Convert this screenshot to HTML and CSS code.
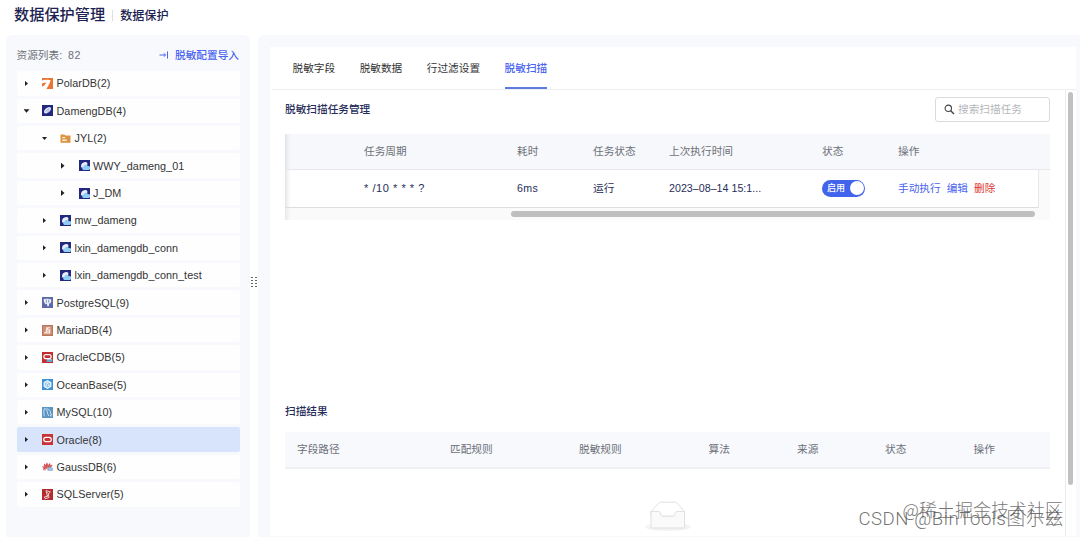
FILE: index.html
```html
<!DOCTYPE html>
<html lang="zh-CN">
  <head>
    <meta charset="utf-8">
    <title>数据保护管理</title>
    <link rel="stylesheet" href="styles.css">
  </head>
  <body>
    <!-- icon set -->
    <svg class="defs" width="0" height="0">
      <symbol id="polar" viewBox="0 0 11 11"><rect width="11" height="11" fill="#ea7432"/><path d="M0 2.6C2 1.6 5 1.6 8.6 2.2 8 4.8 6.6 7.6 4.400 11H0V8.600C2 7.800 3.600 6.200 4.400 4.400 3 4.600 1.400 4.800 0 5.600Z" fill="#fff"/></symbol>
      <symbol id="dameng" viewBox="0 0 11 11"><rect width="11" height="11" fill="#22287e"/><path d="M2 6.6C2.4 4.4 4.4 2.4 6.6 2.2 8.6 1.8 9.4 3 8.8 4.6 8.2 6.6 6.4 8 4.4 8.4 2.8 8.6 1.8 8 2 6.6Z" fill="#e3e9f8"/><path d="M3.4 6.4 7.4 3.4M5.2 7.2l2.4-2" stroke="#6f86c6" stroke-width=".7"/></symbol>
      <symbol id="dmconn" viewBox="0 0 11 11"><rect width="11" height="11" fill="#22287e"/><path d="M2 6.4C2 3.9 3.8 2.3 6 2.1c2-.2 2.8.9 2.3 2.7L6 7.6H3.2C2.3 7.6 2 7.2 2 6.4Z" fill="#e8edf9"/><path d="M4.4 9.900a1.800 1.800 0 0 1 .2-3.500 2.300 2.300 0 0 1 4.300-.2A1.900 1.900 0 0 1 10 9.900Z" fill="#8fcdf4"/></symbol>
      <symbol id="folder" viewBox="0 0 11 11"><path d="M.5 1.500h3.900l.9 1h5.200v7.300H.5Z" fill="#dc9340"/><path d="M2.200 4h3v1.300h-3zM2.200 6.400h4.600v1.700H2.200z" fill="#fff0d9"/></symbol>
      <symbol id="postgres" viewBox="0 0 11 11"><rect width="11" height="11" fill="#5c6ba8"/><path d="M1.700 2.200c1.600-.7 5.600-.8 7.500.2.4 1.700-.2 3.300-1.400 4.400L7.400 5.600 6.800 9.200H5.300L4.900 6.500 3.800 7.600C2.500 6.500 1.500 4.100 1.700 2.200Z" fill="#edf0fa"/><path d="M4.300 2.500v3.400M6.700 2.600v3" stroke="#5c6ba8" stroke-width=".7"/></symbol>
      <symbol id="maria" viewBox="0 0 11 11"><rect width="11" height="11" fill="#b9775d"/><rect x="1.200" y="1.200" width="8.600" height="8.600" fill="#cf9179"/><path d="M4.300 2.200h4v1H6.200v1h2v4.400h-6v-1l2-.9-1-.8 1.100-1Z" fill="#fff1e8"/><path d="M5 5.400h2M4.700 7.100h2.400" stroke="#b9775d" stroke-width=".6"/></symbol>
      <symbol id="oraclecdb" viewBox="0 0 11 11"><rect width="11" height="11" fill="#c22d30"/><rect x="1.900" y="2.700" width="7.200" height="3.900" rx="1.950" fill="none" stroke="#fff" stroke-width="1.200"/><path d="M4.600 10V7.100h5.600V10Z" fill="#68a5cb"/><path d="M5 7.200h4.600" stroke="#fff" stroke-width=".6"/></symbol>
      <symbol id="ocean" viewBox="0 0 11 11"><rect width="11" height="11" fill="#3e91d6"/><path d="M5.500 1 9.400 3.300v4.500L5.500 10 1.600 7.800V3.300Z" fill="#e9f5ff"/><path d="M5.500 3.200 7.600 4.400v2.300L5.500 7.900 3.400 6.700V4.400ZM5.500 5.500v2.200M3.500 4.500l2 1 2-1" fill="none" stroke="#59a5df" stroke-width=".6"/></symbol>
      <symbol id="mysql" viewBox="0 0 11 11"><rect width="11" height="11" fill="#5b96c4"/><path d="M2.300 9.300C1.800 6.800 1.700 3.600 2.200 1.800 4 1.600 5 3.200 5.300 4.800c.3 1.800.6 3.200 1.600 4.300M4.600 1.700c2.600.4 3.800 2 4 4.300.1.900.5 1.500 1.100 2L8.200 8.200l.8 1.300" fill="none" stroke="#e6f2fb" stroke-width=".8"/></symbol>
      <symbol id="oracle" viewBox="0 0 11 11"><rect width="11" height="11" fill="#c93335"/><rect x="1.700" y="3.400" width="7.600" height="4.200" rx="2.100" fill="none" stroke="#fff" stroke-width="1.100"/></symbol>
      <symbol id="gauss" viewBox="0 0 11 11"><g fill="#d54b49"><path d="M5.200 8.600C3.400 5.800 3.500 3 5 1.600c1.300 1.600 1.200 4 .2 7Z"/><path d="M4.600 8.500C2.400 6.800 1.400 4.600 2.200 2.600c1.800 1.200 2.500 3.400 2.400 5.900Z"/><path d="M4.200 8.700C1.800 8.100.4 6.800.3 4.900c2 .4 3.400 1.800 3.900 3.800ZM3.900 9.200H1.500L.7 7.800Z"/><path d="M6 7.600C5.700 5 6.200 2.800 8 1.900c1 1.900.1 4-2 5.700ZM7.300 6.400C7.800 4.600 8.900 3.600 10.400 3.700c0 1.500-1 2.500-3.100 2.700Z"/></g><path d="M5.500 9.700V6.400l2.200-.8 3 1.500v2.600Z" fill="#83a5ca"/><path d="M6.600 7.500h3M6.600 8.700h3" stroke="#d8e5f1" stroke-width=".5"/></symbol>
      <symbol id="mssql" viewBox="0 0 11 11"><rect width="11" height="11" fill="#b22c30"/><path d="M4 1.600 8.400 3 6.300 4.900 7 8.500 3.200 9.700 2.300 7.900 5.400 7.500 4.800 4.900Z" fill="none" stroke="#f6dcdc" stroke-width=".9"/><path d="M4.900 3.200 6.400 4.700M4.700 7.600l1.700-1.800" stroke="#fff" stroke-width=".8"/></symbol>
    </svg>

    <header class="page-head">
      <h1>数据保护管理</h1>
      <span class="divider"></span>
      <span class="crumb">数据保护</span>
    </header>

    <div class="layout">
      <aside class="sidebar">
        <div class="side-head">
          <span>资源列表:&nbsp; <span class="total">82</span></span>
          <a class="import">
            <svg width="10" height="8" viewBox="0 0 10 8"><path d="M.5 4h6M4.800 2.300 6.600 4 4.800 5.700M8.500.4v7.200" fill="none" stroke="#4a63f0" stroke-width="1"/></svg>
            脱敏配置导入
          </a>
        </div>
        <ul class="tree">
          <li><i class="caret"></i><svg class="db"><use href="#polar"/></svg>PolarDB(2)</li>
          <li><i class="caret open"></i><svg class="db"><use href="#dameng"/></svg>DamengDB(4)</li>
          <li class="lv2"><i class="caret open"></i><svg class="db"><use href="#folder"/></svg>JYL(2)</li>
          <li class="lv3"><i class="caret"></i><svg class="db"><use href="#dmconn"/></svg>WWY_dameng_01</li>
          <li class="lv3"><i class="caret"></i><svg class="db"><use href="#dmconn"/></svg>J_DM</li>
          <li class="lv2"><i class="caret"></i><svg class="db"><use href="#dmconn"/></svg>mw_dameng</li>
          <li class="lv2"><i class="caret"></i><svg class="db"><use href="#dmconn"/></svg>lxin_damengdb_conn</li>
          <li class="lv2"><i class="caret"></i><svg class="db"><use href="#dmconn"/></svg>lxin_damengdb_conn_test</li>
          <li><i class="caret"></i><svg class="db"><use href="#postgres"/></svg>PostgreSQL(9)</li>
          <li><i class="caret"></i><svg class="db"><use href="#maria"/></svg>MariaDB(4)</li>
          <li><i class="caret"></i><svg class="db"><use href="#oraclecdb"/></svg>OracleCDB(5)</li>
          <li><i class="caret"></i><svg class="db"><use href="#ocean"/></svg>OceanBase(5)</li>
          <li><i class="caret"></i><svg class="db"><use href="#mysql"/></svg>MySQL(10)</li>
          <li class="selected"><i class="caret"></i><svg class="db"><use href="#oracle"/></svg>Oracle(8)</li>
          <li><i class="caret"></i><svg class="db"><use href="#gauss"/></svg>GaussDB(6)</li>
          <li><i class="caret"></i><svg class="db"><use href="#mssql"/></svg>SQLServer(5)</li>
        </ul>
      </aside>

      <div class="splitter">
        <span></span><span></span><span></span><span></span>
        <span></span><span></span><span></span><span></span>
      </div>

      <main class="main">
        <div class="card">
          <nav class="tabs">
            <a>脱敏字段</a>
            <a>脱敏数据</a>
            <a>行过滤设置</a>
            <a class="active">脱敏扫描</a>
          </nav>
          <div class="card-body">
            <div class="content">
              <div class="title-row">
                <h2>脱敏扫描任务管理</h2>
                <label class="search">
                  <svg width="11" height="11" viewBox="0 0 11 11"><circle cx="4.300" cy="4.300" r="3.200" fill="none" stroke="#444" stroke-width="1.100"/><path d="M6.700 6.700 10 10" stroke="#444" stroke-width="1.400"/></svg>
                  <span>搜索扫描任务</span>
                </label>
              </div>

              <div class="task-table">
                <div class="task-row task-head">
                  <span></span><span>任务周期</span><span>耗时</span><span>任务状态</span><span>上次执行时间</span><span>状态</span><span>操作</span>
                </div>
                <div class="task-row task-data">
                  <span></span><span class="cron">* /10 * * * ?</span><span class="cost">6ms</span><span>运行</span><span class="time">2023–08–14 15:1...</span>
                  <span><b class="switch">启用<i></i></b></span>
                  <span class="ops"><a>手动执行</a><a>编辑</a><a class="danger">删除</a></span>
                </div>
                <div class="hscroll"><div class="hthumb"></div></div>
              </div>

              <h2 class="result-title">扫描结果</h2>
              <div class="result-head">
                <span>字段路径</span><span>匹配规则</span><span>脱敏规则</span><span>算法</span><span>来源</span><span>状态</span><span>操作</span>
              </div>
              <div class="empty">
                <svg width="46" height="30" viewBox="0 0 46 30"><ellipse cx="23" cy="26" rx="23" ry="4" fill="#f3f3f4"/><g fill="#fafafa" stroke="#d9d9d9" stroke-width=".8"><path d="M39.500 10.500 31.800 1.800c-.3-.4-.7-.6-1.200-.6H15.400c-.5 0-.9.2-1.200.6L6 10.500v4.800h33.500Z" fill="#fff"/><path d="M29.900 13c0-1.400.9-2.500 2-2.500h7.600v15.300c0 .6-.5 1.200-1.200 1.200H7.200c-.7 0-1.200-.6-1.200-1.200V10.500h7.600c1.100 0 2 1.100 2 2.500s.9 2.200 2 2.200h10.300c1.100 0 2-.8 2-2.200Z"/></g></svg>
              </div>
            </div>
            <div class="vscroll"><div class="vthumb"></div></div>
          </div>
        </div>
      </main>
    </div>

    <div class="mark mark-top">@稀土掘金技术社区</div>
    <div class="mark mark-bottom">CSDN @BinTools图尔兹</div>
  </body>
</html>
```
FILE: styles.css
```css
* {
  box-sizing: border-box;
}

html, body {
  height: 537px;
  overflow: hidden;
}

body {
  margin: 0;
  background: #fff;
  color: #333;
  font-family: "Liberation Sans", "Noto Sans CJK SC", sans-serif;
  font-size: 10.67px;
  line-height: 16px;
  display: flex;
  flex-direction: column;
}

h1, h2, ul {
  margin: 0;
  padding: 0;
}

svg {
  display: block;
  flex: none;
}

.defs {
  position: absolute;
}

/* header */
.page-head {
  height: 35px;
  padding: 4px 14px 0;
  display: flex;
  align-items: flex-start;
  color: #1d2350;
}

.page-head h1 {
  font-size: 15.2px;
  line-height: 22px;
  font-weight: 500;
}

.divider {
  width: 1px;
  height: 11px;
  margin: 6px 7px 0;
  background: #dcdee3;
}

.crumb {
  font-size: 12.1px;
  line-height: 24px;
  font-weight: 500;
}

.layout {
  flex: 1;
  display: flex;
  padding-left: 6px;
}

/* resource tree */
.sidebar {
  width: 244px;
  padding: 12px 10px 0 10.5px;
  background: #f7f9fd;
  border-radius: 6px 6px 0 0;
}

.side-head {
  display: flex;
  justify-content: space-between;
  color: #6d7078;
  line-height: 16px;
}

.total {
  letter-spacing: .6px;
}

.import {
  display: flex;
  align-items: center;
  gap: 6px;
  margin-right: 1px;
  color: #4a63f0;
  font-weight: 500;
}

.tree {
  margin-top: 8.3px;
  list-style: none;
  display: flex;
  flex-direction: column;
  gap: 3px;
}

.tree li {
  height: 24.4px;
  padding-left: 8px;
  display: flex;
  align-items: center;
  background: #fefeff;
  border-radius: 2px;
  font-size: 10.8px;
  letter-spacing: .05px;
}

.tree li.lv2 {
  padding-left: 26px;
}

.tree li.lv3 {
  padding-left: 44.5px;
}

.tree li.selected {
  background: #d8e3fc;
}

.caret {
  width: 3.5px;
  height: 6px;
  margin-right: 14px;
  background: #222;
  clip-path: polygon(0 0, 100% 50%, 0 100%);
}

.caret.open {
  width: 6px;
  height: 3.5px;
  margin: 0 12.5px 0 -1px;
  clip-path: polygon(0 0, 100% 0, 50% 100%);
}

.db {
  width: 11px;
  height: 11px;
  margin-right: 3.5px;
}

.splitter {
  width: 8px;
  padding: 242px 0 0 1px;
  display: grid;
  grid-template-columns: 2px 2px;
  grid-auto-rows: 1px;
  gap: 2px;
  align-content: start;
}

.splitter span {
  background: #666;
}

/* main panel */
.main {
  flex: 1;
  display: flex;
  padding: 12px 4px 1px 12px;
  background: #f7f9fd;
  border-radius: 6px 0 0 0;
}

.card {
  flex: 1;
  display: flex;
  flex-direction: column;
  background: #fff;
}

.tabs {
  height: 42.5px;
  margin-left: 2px;
  padding-left: 20.5px;
  display: flex;
  gap: 24.5px;
  border-bottom: 1px solid #eceef2;
  line-height: 42px;
}

.tabs a.active {
  height: 42px;
  color: #4a63f0;
  font-weight: 500;
  border-bottom: 2px solid #5b7be0;
}

.card-body {
  flex: 1;
  display: flex;
}

.content {
  flex: 1;
  padding: 7px 15px 0 15px;
}

.title-row {
  display: flex;
  justify-content: space-between;
  align-items: center;
}

h2 {
  font-size: 10.67px;
  font-weight: 500;
  color: #272d59;
}

.search {
  width: 115px;
  height: 25px;
  padding-left: 8px;
  display: flex;
  align-items: center;
  gap: 3px;
  border: 1px solid #d9dbdf;
  border-radius: 3px;
  color: #b5b7bb;
}

.task-table {
  margin-top: 12px;
  width: 765px;
  height: 86px;
  background: linear-gradient(90deg, #e6e8eb 0, #f2f3f4 3px, #fafafa 6px);
}

.task-row {
  display: grid;
  grid-template-columns: 79px 153px 76px 76px 153px 76px 1fr;
  align-items: center;
}

.task-head {
  height: 36px;
  background: linear-gradient(90deg, #dfe2e7 0, #eef1f5 3px, #f6f8fc 6px);
  border-bottom: 1px solid #e6e8ec;
  color: #6d7078;
}

.task-data {
  width: 754px;
  height: 38px;
  background: linear-gradient(90deg, #e3e4e6 0, #f5f5f6 3px, #fff 6px);
  border-right: 1px solid #e8e8e8;
  border-bottom: 1px solid #dedede;
  color: #272d59;
}

.cron {
  font-size: 11px;
  letter-spacing: .55px;
}

.cost {
  letter-spacing: .3px;
}

.time {
  letter-spacing: .02px;
}

.switch {
  width: 43px;
  height: 17px;
  padding: 0 2px 0 5px;
  display: flex;
  align-items: center;
  justify-content: space-between;
  background: #4263eb;
  border-radius: 9px;
  color: #fff;
  font-size: 9px;
  font-weight: 500;
}

.switch i {
  width: 14px;
  height: 14px;
  margin-right: -1px;
  background: #fff;
  border-radius: 50%;
}

.ops {
  display: flex;
  gap: 6px;
  color: #4a63f0;
}

.ops .danger {
  color: #e0332e;
}

.hscroll {
  height: 12px;
  padding: 3px 15px 0 226px;
}

.hthumb {
  height: 6px;
  background: #bfbfbf;
  border-radius: 3px;
}

.result-title {
  margin-top: 183px;
}

.result-head {
  width: 765px;
  height: 37px;
  margin-top: 13px;
  padding-left: 12px;
  display: grid;
  grid-template-columns: 153px 129px 129.5px 88.5px 88px 88.5px 1fr;
  align-items: center;
  background: #f7f9fd;
  border-bottom: 2px solid #eef0f4;
  color: #6d7078;
}

.empty {
  margin-top: 32px;
  display: flex;
  justify-content: center;
}

.vscroll {
  width: 11px;
  padding: 2px 3px 0 2px;
  border-left: 1px solid #ececee;
}

.vthumb {
  height: 393px;
  background: #c1c1c1;
  border-radius: 3px;
}

/* watermarks laid over the page */
.mark {
  position: absolute;
  white-space: nowrap;
  font-weight: 300;
  color: rgba(70, 70, 70, .75);
}

.mark-top {
  right: 17px;
  top: 497px;
  font-family: "Noto Sans CJK SC", sans-serif;
  font-size: 18px;
  line-height: 24px;
}

.mark-bottom {
  right: 16px;
  top: 507px;
  font-family: Roboto, "Noto Sans CJK SC", sans-serif;
  font-size: 18.6px;
  letter-spacing: .55px;
  line-height: 24px;
}
```
